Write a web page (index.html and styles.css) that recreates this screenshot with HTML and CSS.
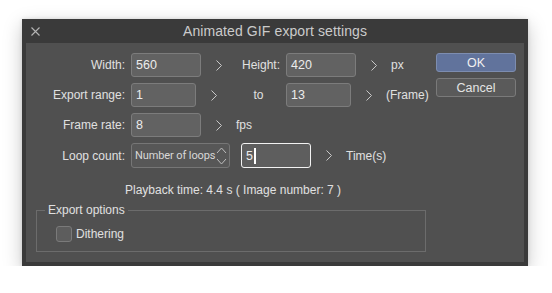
FILE: index.html
```html
<!DOCTYPE html>
<html lang="en">

<head>
  <meta charset="UTF-8">
  <meta name="viewport" content="width=device-width, initial-scale=1.0">
  <title>Animated GIF export settings</title>
  <link rel="stylesheet" href="styles.css">
</head>

<body>
  <div class="window">
    <div class="titlebar">
      <span class="close">
        <svg width="9" height="9" viewBox="0 0 9 9"><path d="M0.5 0.5 L8.5 8.5 M8.5 0.5 L0.5 8.5" stroke="#b4b4b4" stroke-width="1.1" fill="none"/></svg>
      </span>
      <span class="title">Animated GIF export settings</span>
    </div>
    <div class="panel">
      <div class="main">
        <!-- 宽高 -->
        <div class="row">
          <label class="lbl">Width:</label>
          <div class="field w70">560</div>
          <span class="arrow"><svg width="6" height="11" viewBox="0 0 6 11"><path d="M0.5 0.5 L5.5 5.5 L0.5 10.5" stroke="#c8c8c8" fill="none"/></svg></span>
          <label class="lbl2">Height:</label>
          <div class="field w70">420</div>
          <span class="arrow"><svg width="6" height="11" viewBox="0 0 6 11"><path d="M0.5 0.5 L5.5 5.5 L0.5 10.5" stroke="#c8c8c8" fill="none"/></svg></span>
          <span class="unit">px</span>
        </div>
        <!-- 导出范围 -->
        <div class="row">
          <label class="lbl">Export range:</label>
          <div class="field w65">1</div>
          <span class="arrow"><svg width="6" height="11" viewBox="0 0 6 11"><path d="M0.5 0.5 L5.5 5.5 L0.5 10.5" stroke="#c8c8c8" fill="none"/></svg></span>
          <span class="to">to</span>
          <div class="field w65">13</div>
          <span class="arrow"><svg width="6" height="11" viewBox="0 0 6 11"><path d="M0.5 0.5 L5.5 5.5 L0.5 10.5" stroke="#c8c8c8" fill="none"/></svg></span>
          <span class="unit">(Frame)</span>
        </div>
        <!-- 帧率 -->
        <div class="row">
          <label class="lbl">Frame rate:</label>
          <div class="field w70">8</div>
          <span class="arrow"><svg width="6" height="11" viewBox="0 0 6 11"><path d="M0.5 0.5 L5.5 5.5 L0.5 10.5" stroke="#c8c8c8" fill="none"/></svg></span>
          <span class="unit">fps</span>
        </div>
        <!-- 循环次数 -->
        <div class="row">
          <label class="lbl">Loop count:</label>
          <div class="select">
            <span class="select-text">Number of loops</span>
            <svg width="11" height="22" viewBox="0 0 11 22"><path d="M1 8 L5.5 3 L10 8 M1 14 L5.5 19 L10 14" stroke="#bdbdbd" fill="none"/></svg>
          </div>
          <div class="field w70 focus">5<span class="caret"></span></div>
          <span class="arrow"><svg width="6" height="11" viewBox="0 0 6 11"><path d="M0.5 0.5 L5.5 5.5 L0.5 10.5" stroke="#c8c8c8" fill="none"/></svg></span>
          <span class="unit">Time(s)</span>
        </div>

        <p class="playback">Playback time: 4.4 s ( Image number: 7 )</p>

        <fieldset class="options">
          <legend>Export options</legend>
          <div class="check-row">
            <span class="checkbox"></span>
            <span>Dithering</span>
          </div>
        </fieldset>
      </div>

      <div class="buttons">
        <button class="btn ok">OK</button>
        <button class="btn">Cancel</button>
      </div>
    </div>
  </div>
</body>

</html>
```

FILE: styles.css
```css
* {
  padding: 0;
  margin: 0;
  box-sizing: border-box;
}

body {
  background: #fff;
  font-family: "Liberation Sans", Arial, sans-serif;
  font-size: 12px;
  color: #e0e0e0;
  padding: 19px 0 0 22px;
}

.window {
  width: 506px;
  height: 247px;
  background: #3a3a3a;
  display: flex;
  flex-direction: column;
  box-shadow: 0 6px 18px rgba(0, 0, 0, .22), 0 0 4px rgba(0, 0, 0, .12);
}

.titlebar {
  height: 24px;
  display: flex;
  align-items: center;
  position: relative;
}

.close {
  position: absolute;
  left: 9px;
  top: 8px;
  line-height: 0;
}

.title {
  flex: 1;
  text-align: center;
  font-size: 14px;
  color: #cbcbcb;
  letter-spacing: .1px;
}

.panel {
  flex: 1;
  margin: 0 4px 4px 4px;
  background: #505050;
  display: flex;
  padding: 10px 8px 0 0;
}

.main {
  flex: 1;
}

.row {
  display: flex;
  align-items: center;
  height: 24px;
  margin-bottom: 6px;
}

.row:nth-child(4) {
  height: 25px;
  margin-bottom: 0;
}

.lbl {
  width: 99px;
  text-align: right;
  margin-right: 6px;
}

.lbl2 {
  width: 44px;
  text-align: right;
  margin-right: 6px;
}

.to {
  width: 55px;
  text-align: center;
}

.field {
  height: 24px;
  background: #626262;
  border: 1px solid #7c7c7c;
  border-radius: 3px;
  color: #ececec;
  padding-left: 4px;
  line-height: 22px;
  font-size: 12.5px;
  display: flex;
  align-items: center;
}

.w70 {
  width: 70px;
}

.w65 {
  width: 65px;
}

.focus {
  height: 25px;
  border-color: #f2f2f2;
  background: #5e5e5e;
  margin-left: 11px;
}

.caret {
  width: 2px;
  height: 16px;
  background: #fff;
  margin-left: 1px;
}

.arrow {
  width: 35px;
  display: flex;
  justify-content: center;
  line-height: 0;
}

.select {
  width: 99px;
  height: 25px;
  border: 1px solid #767676;
  border-radius: 3px;
  background: #575757;
  display: flex;
  align-items: center;
  justify-content: space-between;
  padding: 0 2px 0 3px;
}

.select-text {
  font-family: "Roboto", "Liberation Sans", sans-serif;
  font-size: 11px;
  letter-spacing: -.1px;
  white-space: nowrap;
  color: #d8d8d8;
}

.playback {
  padding-left: 99px;
  margin-top: 15px;
  line-height: 14px;
}

.options {
  width: 390px;
  height: 49px;
  margin: 6px 0 0 10px;
  border: 1px solid #6c6c6c;
  padding: 0 0 0 8px;
}

.options legend {
  padding: 0 3px;
  line-height: 14px;
}

.check-row {
  display: flex;
  align-items: center;
  gap: 4px;
  margin: 9px 0 0 11px;
}

.checkbox {
  width: 16px;
  height: 16px;
  border: 1px solid #7a7a7a;
  border-radius: 3px;
  background: #5d5d5d;
}

.buttons {
  width: 80px;
  display: flex;
  flex-direction: column;
  gap: 6px;
}

.btn {
  height: 19px;
  border: 1px solid #7a7a7a;
  border-radius: 3px;
  background: #5a5a5a;
  color: #e4e4e4;
  font-family: "Liberation Sans", Arial, sans-serif;
  font-size: 12.5px;
}

.btn.ok {
  background: #61739c;
  border-color: #7d8db0;
  color: #f0f0f0;
}
```
